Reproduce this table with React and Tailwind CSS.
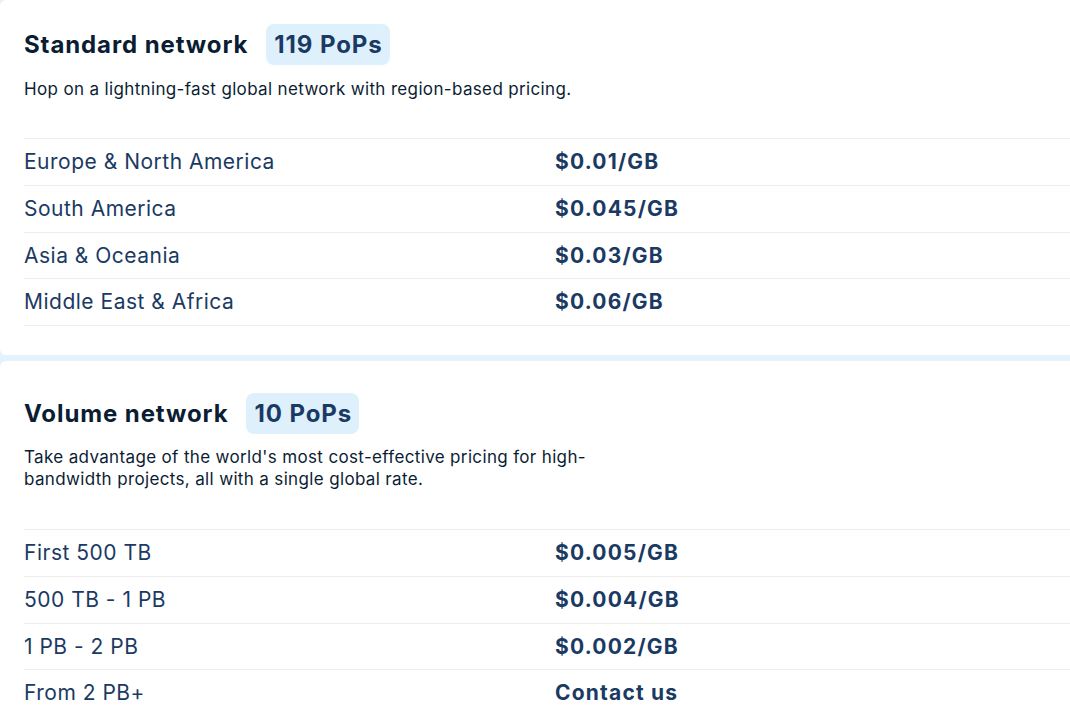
const standard = [
  ["Europe & North America", "$0.01/GB"],
  ["South America", "$0.045/GB"],
  ["Asia & Oceania", "$0.03/GB"],
  ["Middle East & Africa", "$0.06/GB"],
];

const volume = [
  ["First 500 TB", "$0.005/GB"],
  ["500 TB - 1 PB", "$0.004/GB"],
  ["1 PB - 2 PB", "$0.002/GB"],
  ["From 2 PB+", "Contact us"],
];

function PriceTable({ rows }) {
  return (
    <div className="border-b border-[#ececec]">
      {rows.map(([label, price]) => (
        <div
          key={label}
          className="grid grid-cols-[531px_1fr] items-center h-[46.75px] border-t border-[#ececec]"
        >
          <span className="text-[21px] tracking-[0.5px] text-[#1b3a63]">{label}</span>
          <span className="text-[21px] tracking-[1.2px] font-bold text-[#1b3a63]">{price}</span>
        </div>
      ))}
    </div>
  );
}

function Section({ title, pops, children, rows, top }) {
  return (
    <section className={`bg-white rounded-l-md pl-6 ${top}`}>
      <div className="flex items-center gap-[18px] h-[41px]">
        <h2 className="text-[24px] tracking-[0.9px] font-bold text-[#0b1d33]">{title}</h2>
        <span className="h-[41px] flex items-center pl-2 pr-[7px] rounded-lg bg-[#dff0fd] text-[24px] tracking-[0.9px] font-bold text-[#1b3a63]">
          {pops}
        </span>
      </div>
      {children}
      <PriceTable rows={rows} />
    </section>
  );
}

export default function App() {
  return (
    <div
      className="w-[1070px] h-[711px] overflow-hidden bg-[#e3f2fd] flex flex-col gap-[6px]"
      style={{ fontFamily: "Inter, 'Noto Sans', sans-serif" }}
    >
      <Section
        title="Standard network"
        pops="119 PoPs"
        rows={standard}
        top="pt-6 pb-[29px]"
      >
        <p className="mt-3 mb-[37px] text-[17px] tracking-[0.35px] leading-6 text-[#0b1d33]">
          Hop on a lightning-fast global network with region-based pricing.
        </p>
      </Section>
      <Section
        title="Volume network"
        pops="10 PoPs"
        rows={volume}
        top="pt-[32px] pb-10 flex-1"
      >
        <p className="mt-3 mb-[39px] max-w-[585px] text-[17px] tracking-[0.35px] leading-[22px] text-[#0b1d33]">
          Take advantage of the world's most cost-effective pricing for high-bandwidth
          projects, all with a single global rate.
        </p>
      </Section>
    </div>
  );
}
